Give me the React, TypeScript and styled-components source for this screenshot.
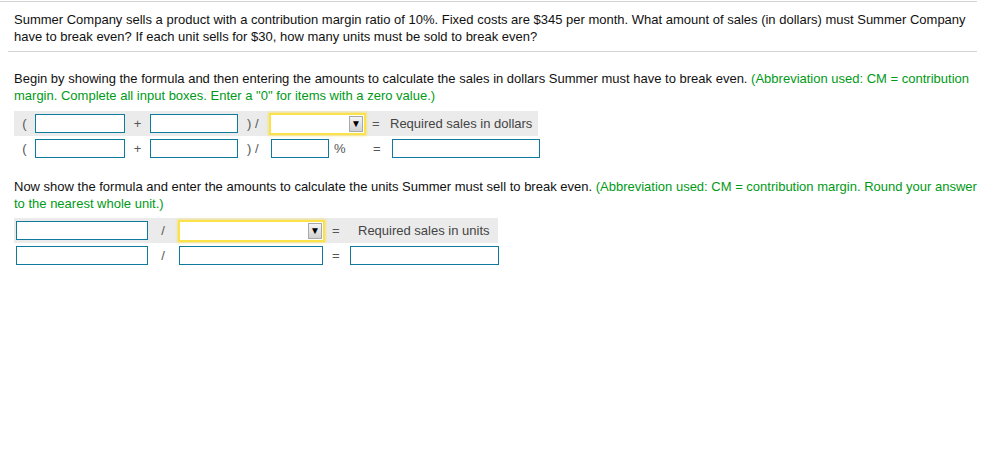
import React from 'react';
import styled, { createGlobalStyle } from 'styled-components';

const GlobalStyle = createGlobalStyle`
  html, body {
    margin: 0;
    padding: 0;
    background: #ffffff;
  }
  body {
    font-family: "Liberation Sans", Arial, Helvetica, sans-serif;
    font-size: 13px;
    line-height: 17px;
    color: #111111;
  }
`;

const Page = styled.div`
  width: 977px;
  margin-top: 1px;
  border-top: 1px solid #d4d4d4;
`;

const Question = styled.div`
  padding: 9px 2px 6px 14px;
`;

const Divider = styled.div`
  margin-left: 8px;
  border-top: 1px solid #d4d4d4;
`;

const Body = styled.div`
  padding: 18px 0 0 14px;
`;

const Instruction = styled.p<{ $top?: number }>`
  margin: ${({ $top }) => $top ?? 0}px 0 0 0;
  width: 965px;
`;

const Hint = styled.span`
  color: #009a17;
`;

const Table = styled.div<{ $top?: number }>`
  margin-top: ${({ $top }) => $top ?? 0}px;
  display: flex;
  flex-direction: column;
`;

const Row = styled.div<{ $cols: string; $shaded?: boolean }>`
  display: grid;
  grid-template-columns: ${({ $cols }) => $cols};
  align-items: center;
  height: 25px;
  background: ${({ $shaded }) => ($shaded ? '#ebebeb' : 'transparent')};
  width: max-content;
`;

const Op = styled.span<{ $align?: string; $pad?: number }>`
  color: #555555;
  text-align: ${({ $align }) => $align ?? 'center'};
  padding-left: ${({ $pad }) => $pad ?? 0}px;
  white-space: nowrap;
`;

const Label = styled.span<{ $pad?: number }>`
  color: #444444;
  padding-left: ${({ $pad }) => $pad ?? 0}px;
  white-space: nowrap;
`;

const Input = styled.input<{ $w: number; $ml?: number }>`
  box-sizing: border-box;
  width: ${({ $w }) => $w}px;
  height: 19px;
  margin: 0 0 0 ${({ $ml }) => $ml ?? 0}px;
  padding: 0 3px;
  border: 1px solid #0f7a9c;
  border-radius: 0;
  background: #ffffff;
  font: inherit;
  outline: none;
`;

const Cell = styled.div`
  display: flex;
  align-items: center;
  gap: 5px;
`;

const SelectBox = styled.div<{ $w: number; $ml?: number }>`
  box-sizing: border-box;
  width: ${({ $w }) => $w}px;
  height: 22px;
  margin-left: ${({ $ml }) => $ml ?? 0}px;
  border: 2px solid #fbe24a;
  box-shadow: 0 0 2px 1px rgba(250, 222, 70, 0.55);
  background: #ffffff;
  display: flex;
  justify-content: flex-end;
  align-items: center;
  padding-right: 1px;
`;

const SelectButton = styled.div`
  box-sizing: border-box;
  width: 14px;
  height: 16px;
  border: 1px solid #a8a8a8;
  background: linear-gradient(#f4f4f4, #d2d2d2);
  display: flex;
  align-items: center;
  justify-content: center;
  font-size: 10px;
  line-height: 10px;
  color: #000000;
`;

const Select = ({ w, ml }: { w: number; ml?: number }) => (
  <SelectBox $w={w} $ml={ml}>
    <SelectButton>▼</SelectButton>
  </SelectBox>
);

const dollarCols = '21px 90px 25px 88px 30px 100px 22px 148px';
const unitCols = '136px 26px 152px 20px 150px';

export default function App() {
  return (
    <>
      <GlobalStyle />
      <Page>
        <Question>
          Summer Company sells a product with a contribution margin ratio of 10%. Fixed costs are $345 per month. What amount of sales (in dollars) must Summer Company have to break even? If each unit sells for $30, how many units must be sold to break even?
        </Question>
        <Divider />
        <Body>
          <Instruction>
            Begin by showing the formula and then entering the amounts to calculate the sales in dollars Summer must have to break even.{' '}
            <Hint>(Abbreviation used: CM = contribution margin. Complete all input boxes. Enter a "0" for items with a zero value.)</Hint>
          </Instruction>
          <Table $top={7}>
            <Row $cols={dollarCols} $shaded>
              <Op>(</Op>
              <Input $w={90} />
              <Op>+</Op>
              <Input $w={88} />
              <Op $align="left" $pad={9}>) /</Op>
              <Select w={97} ml={1} />
              <Op $align="left" $pad={4}>=</Op>
              <Label $pad={0}>Required sales in dollars</Label>
            </Row>
            <Row $cols={dollarCols}>
              <Op>(</Op>
              <Input $w={90} />
              <Op>+</Op>
              <Input $w={88} />
              <Op $align="left" $pad={9}>) /</Op>
              <Cell>
                <Input $w={58} $ml={3} />
                <Op>%</Op>
              </Cell>
              <Op $align="left" $pad={5}>=</Op>
              <Input $w={148} $ml={2} />
            </Row>
          </Table>
          <Instruction $top={17}>
            Now show the formula and enter the amounts to calculate the units Summer must sell to break even.{' '}
            <Hint>(Abbreviation used: CM = contribution margin. Round your answer to the nearest whole unit.)</Hint>
          </Instruction>
          <Table $top={6}>
            <Row $cols={unitCols} $shaded>
              <Input $w={132} $ml={2} />
              <Op>/</Op>
              <Select w={147} ml={2} />
              <Op $align="left" $pad={4}>=</Op>
              <Label $pad={10}>Required sales in units</Label>
            </Row>
            <Row $cols={unitCols}>
              <Input $w={132} $ml={2} />
              <Op>/</Op>
              <Input $w={144} $ml={3} />
              <Op $align="left" $pad={4}>=</Op>
              <Input $w={149} $ml={2} />
            </Row>
          </Table>
        </Body>
      </Page>
    </>
  );
}
